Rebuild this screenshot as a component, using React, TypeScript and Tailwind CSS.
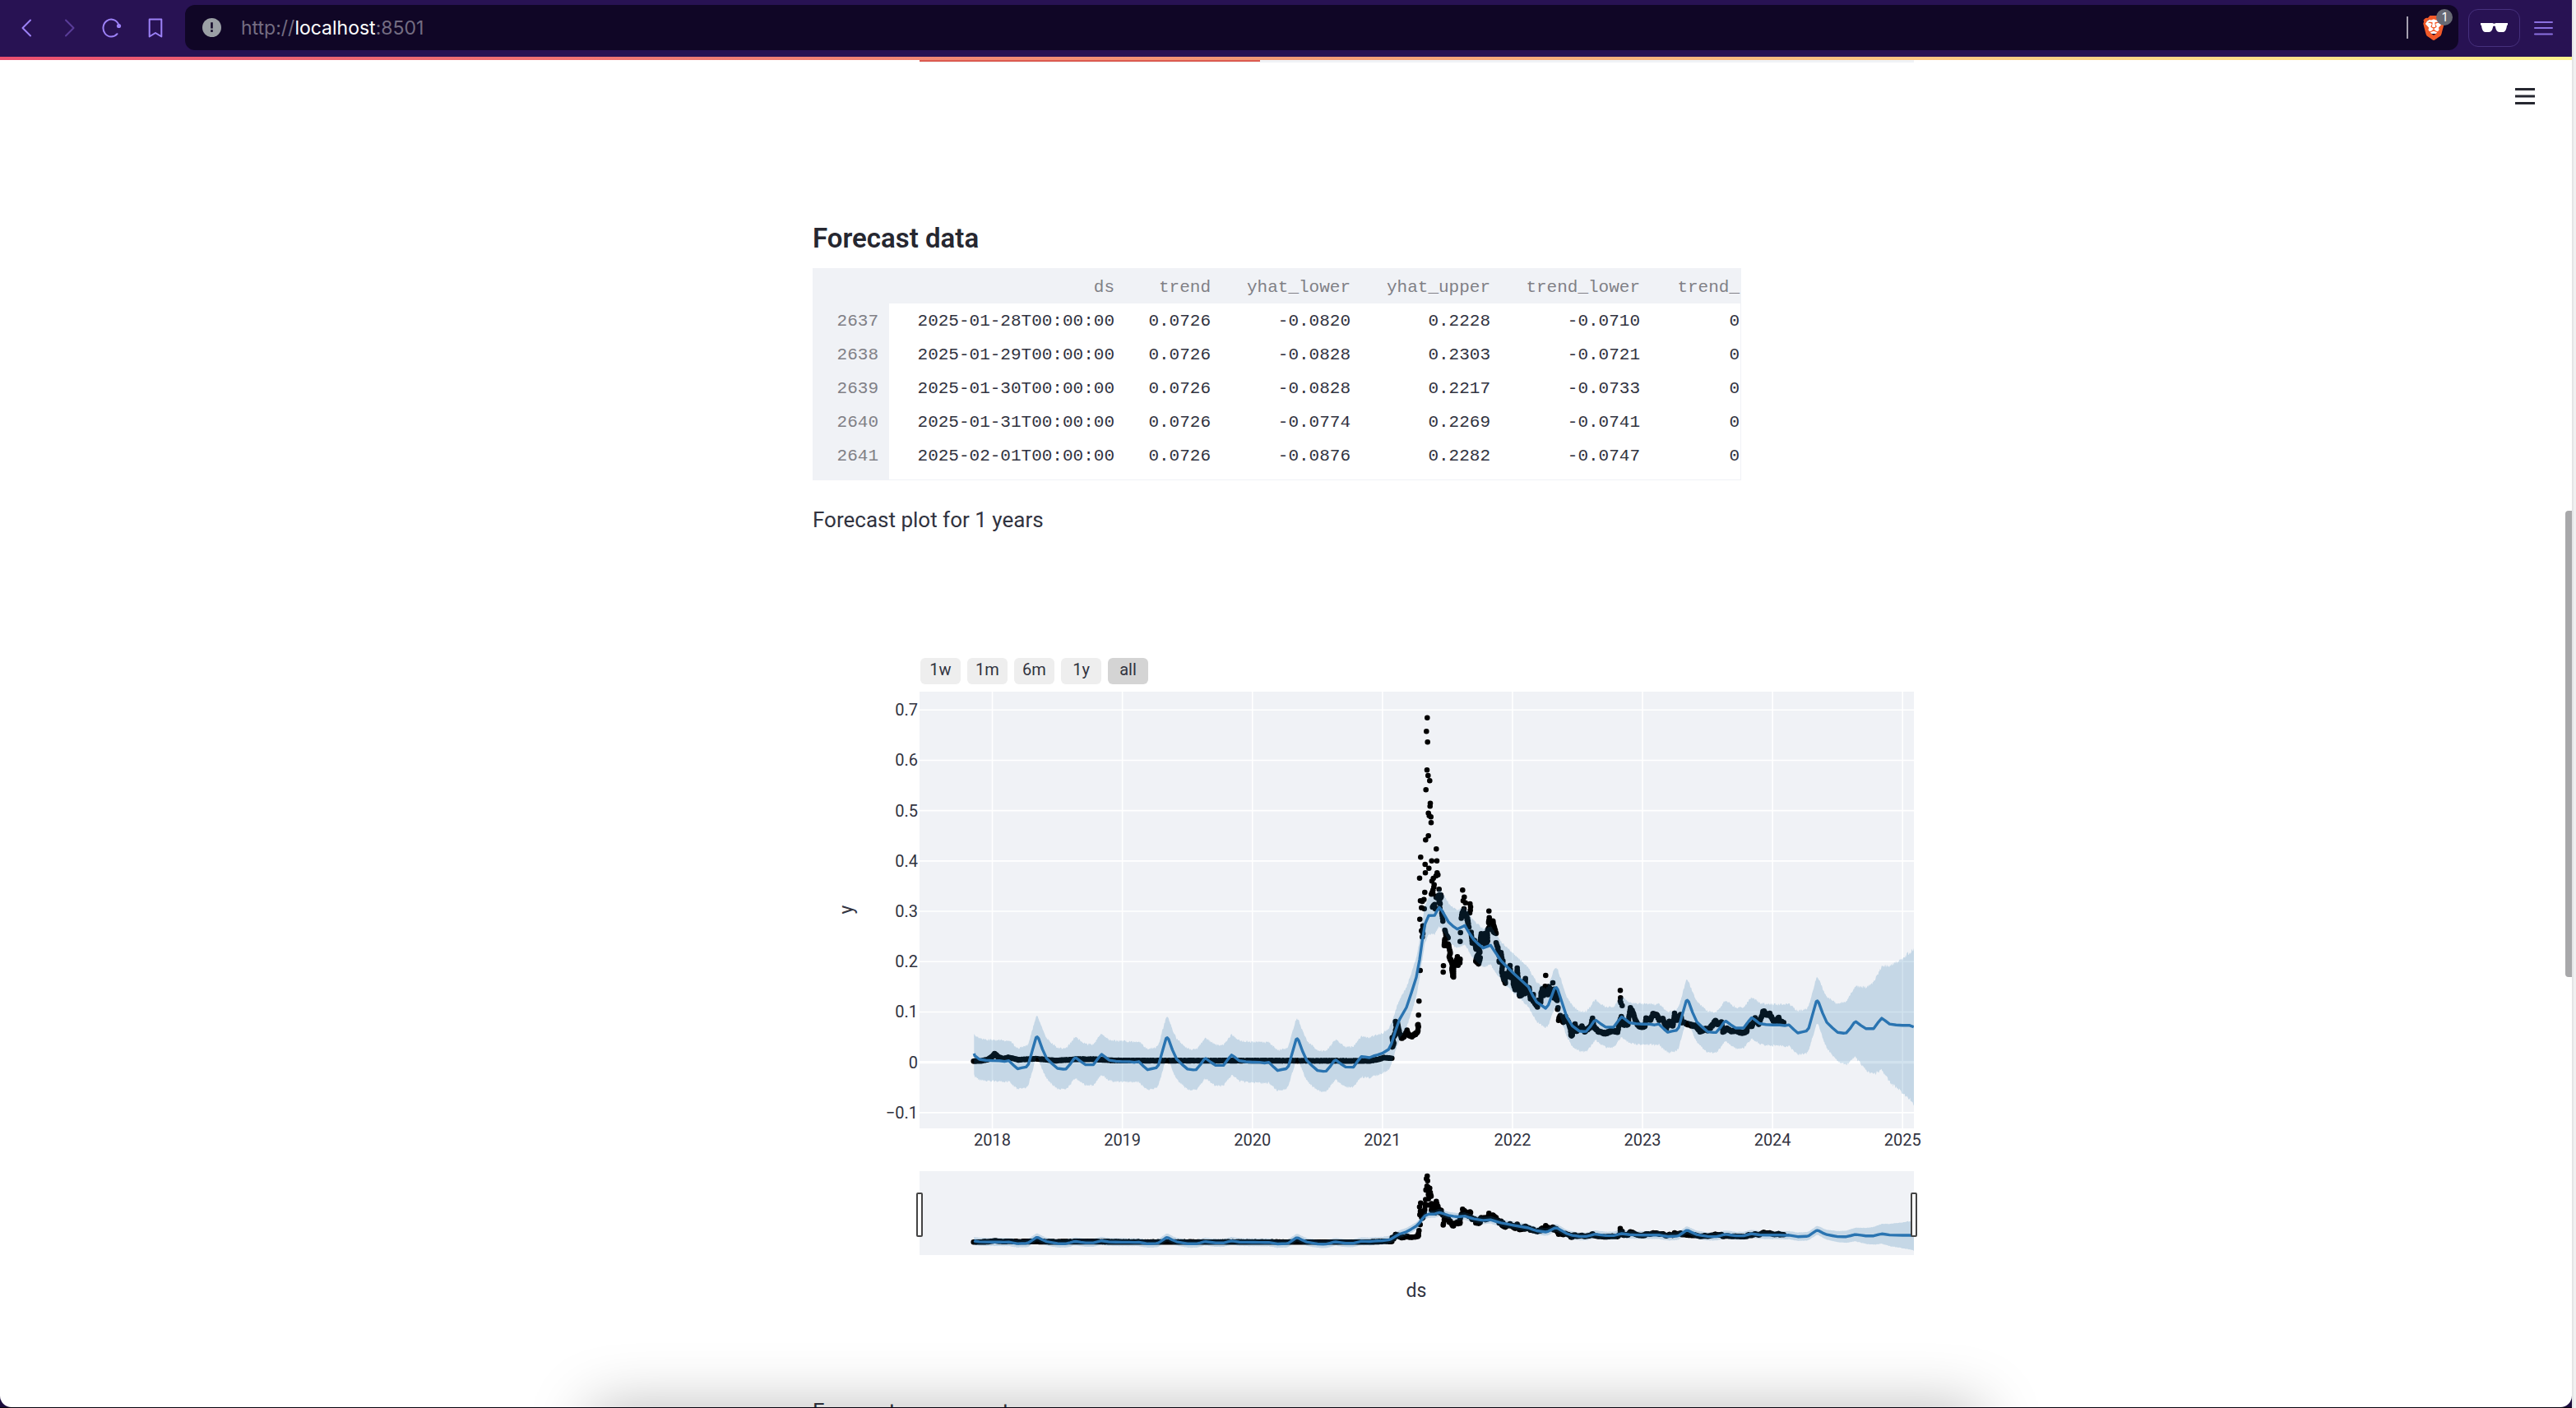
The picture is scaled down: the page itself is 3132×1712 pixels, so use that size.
import { SiBrave } from "react-icons/si";

type Point = [number, number];

/* ---------- Chart geometry ---------- */

// Samples are integers on a fine grid: 474.3 units per year, 1836 units per 1.0 of price.
const UNITS_PER_YEAR = 474.3;
const UNITS_PER_PRICE = 1836;
const X_2021 = 62.5;
const Y_ZERO = 1355;

const LEFT = 1118;
const RIGHT = 2327;
const MAIN_TOP = 841;
const MAIN_BOTTOM = 1372;
const NAV_TOP = 1424;
const NAV_BOTTOM = 1526;

const yearX = (year: number) => X_2021 + (year - 2021) * UNITS_PER_YEAR;
const priceY = (price: number) => Y_ZERO - price * UNITS_PER_PRICE;

type Scale = (p: Point) => Point;
const mainScale: Scale = ([x, y]) => [1660 + x / 3, 840 + y / 3];
const navScale: Scale = ([x, y]) => {
  const main = 840 + y / 3;
  const ratio = (main - MAIN_TOP) / (MAIN_BOTTOM - MAIN_TOP);
  return [1660 + x / 3, NAV_TOP + ratio * (NAV_BOTTOM - NAV_TOP)];
};

/* ---------- Forecast ---------- */

const SEASON: Point[] = [
  [0, 0.0033], [0.055, 0.0033], [0.094, 0.002], [0.126, 0.0036], [0.165, -0.006], [0.194, -0.0125],
  [0.225, -0.0105], [0.26, -0.0087], [0.278, -0.003], [0.305, 0.022], [0.336, 0.05], [0.345, 0.0512], [0.355, 0.048],
  [0.385, 0.027], [0.417, 0.0087], [0.46, -0.002], [0.501, -0.011], [0.545, -0.0125], [0.567, -0.012],
  [0.6, -0.002], [0.628, 0.0085], [0.642, 0.0103], [0.68, 0.003], [0.717, -0.0033], [0.777, -0.0033],
  [0.815, 0.01], [0.84, 0.0174], [0.865, 0.013], [0.9, 0.006], [0.95, 0.004],
];

const TREND: Point[] = [
  [2017, 0], [2018, 0], [2019, -0.002], [2020, -0.003], [2020.8, -0.0065],
  [2022.5, 0.0737], [2023, 0.0725], [2024, 0.071], [2026, 0.069],
];

const RALLY: Point[] = [
  [-14, 1334], [0, 1336], [15, 1338], [30, 1332], [45, 1328], [62, 1322], [85, 1308], [95, 1288], [110, 1240], [125, 1198], [150, 1155],
  [168, 1102], [186, 1045], [198, 980], [208, 910], [218, 850], [231, 820], [253, 819], [262, 802], [270, 790], [278, 799], [304, 844],
  [322, 860], [335, 869], [363, 856], [380, 885], [395, 907], [415, 926], [430, 938], [457, 928], [475, 955], [495, 985], [515, 1005], [540, 1030],
  [573, 1060], [595, 1080], [610, 1110], [625, 1135], [658, 1158], [668, 1145], [690, 1085], [697, 1082], [702, 1090], [735, 1190],
  [755, 1222], [780, 1241],
];

const SPREAD: Point[] = [
  [2017, 0.041], [2021.2, 0.04], [2021.33, 0.037], [2022.5, 0.04], [2024.08, 0.041], [2024.34, 0.046], [2024.504, 0.057],
  [2024.635, 0.07], [2024.77, 0.09], [2024.84, 0.104], [2025, 0.133], [2025.1, 0.156],
];

function lerp(points: Point[], at: number): number {
  for (let i = 1; i < points.length; i++) {
    const [x1, y1] = points[i];
    if (at <= x1) {
      const [x0, y0] = points[i - 1];
      return y0 + ((at - x0) / (x1 - x0)) * (y1 - y0);
    }
  }
  return points[points.length - 1][1];
}

function noise(seed: number): number {
  const n = Math.sin(seed * 12.9898) * 43758.5453;
  return (n - Math.floor(n)) * 2 - 1;
}

const seasonal: Point[] = [];
for (let year = 2017; year <= 2025; year++) {
  for (const [f, v] of SEASON) {
    const t = year + f;
    if (t > 2017.86 && t < 2025.086) seasonal.push([yearX(t), priceY(v + lerp(TREND, t))]);
  }
}

const forecast: Point[] = [
  [-1427, 1323],
  ...seasonal.filter(([x]) => x < -14),
  ...RALLY,
  ...seasonal.filter(([x]) => x > 780),
  [yearX(2025.086), 1226],
];

const upper: Point[] = [];
const lower: Point[] = [];
for (let x = -1427; x <= 2002; x += 2) {
  const t = 2021 + (x - X_2021) / UNITS_PER_YEAR;
  const mid = lerp(forecast, x);
  const spread = lerp(SPREAD, t) * UNITS_PER_PRICE;
  const wobble = 2.5 + spread / 50;
  upper.push([x, mid - spread + noise(x + 5000) * wobble]);
  lower.push([x, mid + spread + noise(x + 9000) * wobble]);
}

/* ---------- Observations ---------- */

const RUNS: Point[][] = [
  [
    [-1429, 1351], [-1400, 1350], [-1377, 1345], [-1360, 1334], [-1352, 1323], [-1340, 1335], [-1320, 1342], [-1302, 1337], [-1265, 1346],
    [-1203, 1342], [-1128, 1349], [-1054, 1344], [-990, 1344], [-929, 1348], [-800, 1349], [-413, 1349], [16, 1350], [47, 1345], [66, 1338], [97, 1340],
  ],
  [[98, 1302], [104, 1285], [98, 1268], [108, 1255], [113, 1225], [110, 1208], [118, 1215], [124, 1245], [132, 1266], [142, 1260], [152, 1240],
    [157, 1254], [170, 1260], [183, 1252], [192, 1240], [194, 1222], [191, 1217]],
  [[258, 755], [268, 748], [277, 748], [269, 765], [273, 778], [272, 790]],
  [[245, 790], [253, 782], [255, 798]],
  [[279, 812], [283, 838]],
  [[290, 872], [294, 890], [302, 902]],
  [[290, 905], [288, 928], [303, 925], [310, 955], [306, 972], [318, 995], [316, 1015], [319, 1038], [322, 1042], [322, 1010], [330, 990], [336, 971], [338, 1000], [346, 980], [345, 990]],
  [[350, 828], [353, 812], [360, 797], [360, 820], [368, 812], [371, 835], [376, 850], [373, 830]],
  [[386, 882], [390, 920], [398, 910], [404, 942], [413, 935], [418, 952], [408, 968], [403, 985], [413, 994], [419, 975]],
  [[418, 918], [423, 885], [426, 918], [434, 888], [438, 925], [446, 910], [445, 878], [453, 862], [462, 868], [468, 880], [477, 884]],
  [[452, 826], [450, 845], [458, 852], [466, 838], [467, 855], [474, 873]],
  [
    [477, 918], [484, 940], [488, 965], [495, 955], [498, 975], [488, 987], [502, 985], [498, 1025], [504, 1050], [511, 1066], [508, 1030], [520, 1042],
    [528, 1005], [532, 1045], [540, 1040], [540, 1070], [547, 1091], [552, 1050], [554, 1014], [558, 1055], [563, 1075], [562, 1111], [572, 1108],
    [575, 1075], [584, 1051], [582, 1105], [590, 1085], [598, 1085], [602, 1122], [613, 1108], [612, 1130], [628, 1151], [632, 1130], [640, 1135],
    [641, 1105], [646, 1088], [650, 1110], [656, 1080], [660, 1090], [666, 1108], [668, 1078], [680, 1098], [690, 1090], [688, 1118], [700, 1127], [696, 1100],
  ],
  [[703, 1157], [701, 1163]],
  [
    [705, 1200], [710, 1184], [722, 1208], [730, 1190], [742, 1212], [748, 1230], [750, 1256], [755, 1256], [752, 1225], [765, 1218], [770, 1240],
    [790, 1225], [800, 1242], [822, 1225], [829, 1193], [833, 1225], [850, 1242], [875, 1250], [900, 1240], [920, 1245], [928, 1205], [934, 1190], [942, 1217],
    [958, 1217], [960, 1200], [967, 1158], [976, 1172], [985, 1200], [992, 1215], [1005, 1228], [1020, 1222], [1024, 1195], [1040, 1200], [1050, 1178], [1065, 1185],
    [1072, 1200], [1085, 1195], [1098, 1232], [1110, 1205], [1122, 1222], [1128, 1178], [1138, 1200], [1150, 1182], [1155, 1208],
    [1175, 1215], [1190, 1220], [1205, 1222], [1222, 1243], [1240, 1232], [1250, 1238], [1268, 1218], [1276, 1203], [1285, 1215], [1300, 1210],
    [1304, 1243], [1320, 1232], [1335, 1242], [1350, 1240], [1378, 1249], [1392, 1240], [1395, 1220], [1410, 1222], [1422, 1195], [1435, 1215],
    [1445, 1190], [1452, 1166], [1462, 1182], [1475, 1178], [1486, 1200], [1492, 1208], [1508, 1192], [1512, 1210], [1526, 1208],
  ],
];

const OUTLIERS: Point[] = [
  [226, 98], [223, 148], [227, 187], [225, 289], [229, 309], [235, 328], [221, 361], [237, 410], [236, 421], [230, 446], [233, 455], [239, 460],
  [240, 481], [230, 529], [220, 544], [259, 577], [202, 607], [242, 620], [261, 620], [218, 633], [232, 647], [219, 664], [198, 683], [262, 664],
  [265, 671], [258, 675], [248, 684], [243, 694], [251, 707], [250, 716], [247, 727], [244, 735], [241, 742], [247, 740], [269, 724], [217, 735],
  [214, 761], [201, 766], [208, 768], [205, 791], [215, 795], [199, 833], [210, 857], [208, 872], [205, 875], [210, 885], [208, 898], [200, 1020],
  [196, 1132], [194, 1183], [285, 1003], [284, 1026], [346, 914], [347, 882], [355, 727], [361, 752], [357, 766], [365, 773], [382, 777],
  [384, 788], [383, 800], [381, 810], [378, 862], [451, 803], [658, 1038], [684, 1065], [930, 1093], [931, 1120], [930, 1132], [937, 1148], [932, 1138],
];

const observations: Point[] = [...OUTLIERS];
RUNS.forEach((run, r) => {
  for (let i = 1; i < run.length; i++) {
    const [x0, y0] = run[i - 1];
    const [x1, y1] = run[i];
    const steps = Math.max(1, Math.round(Math.max(Math.abs(x1 - x0) / 1.3, Math.abs(y1 - y0) / 9)));
    const jitter = r === 0 ? 1 : 3;
    for (let s = 0; s <= steps; s++) {
      const k = s / steps;
      observations.push([x0 + (x1 - x0) * k, y0 + (y1 - y0) * k + noise(x0 + s * 7.3) * jitter]);
    }
  }
});

/* ---------- Paths ---------- */

const fmt = ([x, y]: Point) => `${x.toFixed(1)} ${y.toFixed(1)}`;
const linePath = (points: Point[], scale: Scale) => "M" + points.map((p) => fmt(scale(p))).join("L");
const areaPath = (scale: Scale) => linePath([...upper, ...[...lower].reverse()], scale) + "Z";
const dotPath = (scale: Scale) => observations.map((p) => `M${fmt(scale(p))}h0`).join("");

function Traces({ scale }: { scale: Scale }) {
  return (
    <>
      <path d={dotPath(scale)} fill="none" stroke="#000" strokeWidth="6.6" strokeLinecap="round" />
      <path d={areaPath(scale)} fill="#1970ab" fillOpacity="0.2" />
      <path d={linePath(forecast, scale)} fill="none" stroke="#2a74b1" strokeWidth="3.4" strokeLinejoin="round" />
    </>
  );
}

const YEARS = [2018, 2019, 2020, 2021, 2022, 2023, 2024, 2025];
const PRICES = [0.7, 0.6, 0.5, 0.4, 0.3, 0.2, 0.1, 0, -0.1];

function ForecastChart() {
  return (
    <svg viewBox="988 832 1354 760" className="block w-full fill-[#31333f] font-[Roboto,sans-serif]" role="img" aria-label="Forecast plot">
      <defs>
        <clipPath id="main-plot">
          <rect x={LEFT} y={MAIN_TOP} width={RIGHT - LEFT} height={MAIN_BOTTOM - MAIN_TOP} />
        </clipPath>
        <clipPath id="nav-plot">
          <rect x={LEFT} y={NAV_TOP} width={RIGHT - LEFT} height={NAV_BOTTOM - NAV_TOP} />
        </clipPath>
      </defs>

      <rect x={LEFT} y={MAIN_TOP} width={RIGHT - LEFT} height={MAIN_BOTTOM - MAIN_TOP} fill="#f0f2f6" />
      {YEARS.map((year) => {
        const [x] = mainScale([yearX(year), 0]);
        return (
          <g key={year}>
            <line x1={x} x2={x} y1={MAIN_TOP} y2={MAIN_BOTTOM} stroke="#fff" strokeWidth="1.6" />
            <text x={x} y="1393" fontSize="20" textAnchor="middle">{year}</text>
          </g>
        );
      })}
      {PRICES.map((price) => {
        const [, y] = mainScale([0, priceY(price)]);
        return (
          <g key={price}>
            <line x1={LEFT} x2={RIGHT} y1={y} y2={y} stroke="#fff" strokeWidth={price === 0 ? 3.2 : 1.6} />
            <text x={LEFT - 2} y={y + 7} fontSize="20" textAnchor="end">{price < 0 ? `−${-price}` : price}</text>
          </g>
        );
      })}
      <g clipPath="url(#main-plot)">
        <Traces scale={mainScale} />
      </g>

      <rect x={LEFT} y={NAV_TOP} width={RIGHT - LEFT} height={NAV_BOTTOM - NAV_TOP} fill="#f0f2f6" />
      <g clipPath="url(#nav-plot)">
        <Traces scale={navScale} />
      </g>

      <text x="1722" y="1577" fontSize="23" textAnchor="middle">ds</text>
      <text x="1037" y="1106" fontSize="23" textAnchor="middle" transform="rotate(-90 1037 1106)">y</text>
    </svg>
  );
}

const THUMB =
  "pointer-events-none absolute inset-0 h-full w-full appearance-none bg-transparent [&::-webkit-slider-thumb]:pointer-events-auto [&::-webkit-slider-thumb]:h-[54px] [&::-webkit-slider-thumb]:w-2 [&::-webkit-slider-thumb]:appearance-none [&::-webkit-slider-thumb]:rounded-[2px] [&::-webkit-slider-thumb]:border-2 [&::-webkit-slider-thumb]:border-[#444] [&::-webkit-slider-thumb]:bg-white";

const RANGES = ["1w", "1m", "6m", "1y", "all"];

function ForecastFigure() {
  return (
    <figure className="relative mt-37 w-[1354px]">
      <div className="ml-[131px] flex gap-2">
        {RANGES.map((range) => (
          <button
            key={range}
            type="button"
            className={`h-8 w-[49px] rounded-md pb-1 text-[20px] leading-6 ${range === "all" ? "bg-[#d4d4d4]" : "bg-[#eeeeee]"}`}
          >
            {range}
          </button>
        ))}
      </div>
      <ForecastChart />
      <div className="absolute top-[650px] left-[126px] h-[54px] w-[1217px]">
        <input type="range" min="0" max="100" defaultValue="0" aria-label="Range start" className={THUMB} />
        <input type="range" min="0" max="100" defaultValue="100" aria-label="Range end" className={THUMB} />
      </div>
    </figure>
  );
}

/* ---------- Table ---------- */

const COLUMNS = ["ds", "trend", "yhat_lower", "yhat_upper", "trend_lower", "trend_"];
const ROWS = [
  ["2637", "2025-01-28T00:00:00", "0.0726", "-0.0820", "0.2228", "-0.0710", "0"],
  ["2638", "2025-01-29T00:00:00", "0.0726", "-0.0828", "0.2303", "-0.0721", "0"],
  ["2639", "2025-01-30T00:00:00", "0.0726", "-0.0828", "0.2217", "-0.0733", "0"],
  ["2640", "2025-01-31T00:00:00", "0.0726", "-0.0774", "0.2269", "-0.0741", "0"],
  ["2641", "2025-02-01T00:00:00", "0.0726", "-0.0876", "0.2282", "-0.0747", "0"],
];

function ForecastTable() {
  return (
    <div className="mt-4 overflow-hidden border border-[#f0f2f6]">
      <table className="w-full table-fixed text-right font-['Liberation_Mono',monospace] text-[21px] leading-6">
        <colgroup>
          <col className="w-[92px]" />
          <col className="w-[287px]" />
          <col className="w-[117px]" />
          <col className="w-[170px]" />
          <col className="w-[170px]" />
          <col className="w-[182px]" />
          <col />
        </colgroup>
        <thead>
          <tr className="h-[42px] bg-[#f0f2f6] text-[#808086]">
            <th aria-label="index" />
            {COLUMNS.map((name) => (
              <th key={name} scope="col" className="p-0 pt-1 pr-[13px] font-normal last:pr-px">{name}</th>
            ))}
          </tr>
        </thead>
        <tbody>
          {ROWS.map(([index, ...cells]) => (
            <tr key={index} className="h-[41px]">
              <th scope="row" className="bg-[#f0f2f6] p-0 pt-[2px] pr-[13px] font-normal text-[#808086]">{index}</th>
              {cells.map((cell, i) => (
                <td key={i} className="p-0 pt-[2px] pr-[13px] last:pr-px">{cell}</td>
              ))}
            </tr>
          ))}
          <tr className="h-[9px]">
            <td className="bg-[#f0f2f6] p-0" />
            <td colSpan={6} className="p-0" />
          </tr>
        </tbody>
      </table>
    </div>
  );
}

/* ---------- Browser chrome ---------- */

function Toolbar() {
  return (
    <header className="flex h-[69px] items-center bg-[#281253] pr-[23px] pb-[2px] pl-6">
      <nav className="flex items-center gap-8 text-[#9d82f8]">
        <div className="flex items-center gap-9">
          <button type="button" aria-label="Back">
            <svg className="block h-6 w-4" viewBox="0 0 16 24" fill="none" stroke="currentColor" strokeWidth="2" strokeLinecap="round" strokeLinejoin="round">
              <path d="M13 2.500 3.500 12 13 21.500" />
            </svg>
          </button>
          <button type="button" aria-label="Forward" className="text-[#5a3d9a]">
            <svg className="block h-6 w-4" viewBox="0 0 16 24" fill="none" stroke="currentColor" strokeWidth="2" strokeLinecap="round" strokeLinejoin="round">
              <path d="M4 2.500 13.500 12 4 21.500" />
            </svg>
          </button>
        </div>
        <button type="button" aria-label="Reload">
          <svg className="block h-6 w-6" viewBox="0 0 24 24" fill="none" stroke="currentColor" strokeWidth="2" strokeLinecap="round">
            <path d="M18.500 19.200A9.800 10.500 0 1 1 20.300 8" />
            <circle cx="20.500" cy="9.500" r="2.600" fill="currentColor" stroke="none" />
          </svg>
        </button>
        <button type="button" aria-label="Bookmark">
          <svg className="block h-6 w-[18px]" viewBox="0 0 18 24" fill="none" stroke="currentColor" strokeWidth="2" strokeLinejoin="round">
            <path d="M1.700 1.500h14.600v21L9 18 1.700 22.500z" />
          </svg>
        </button>
      </nav>

      <div className="ml-[27px] flex h-[55px] flex-1 items-center rounded-xl bg-[#100626] pl-[21px] pr-[15px]">
        <svg className="h-[23px] w-[23px]" viewBox="0 0 22 22">
          <circle cx="11" cy="11" r="11" fill="#9ba0a5" />
          <rect x="9.800" y="5" width="2.400" height="7" fill="#100626" />
          <rect x="9.800" y="13.600" width="2.400" height="2.600" fill="#100626" />
        </svg>
        <button type="button" aria-label="Address" className="flex-1 pl-6 text-left font-[Inter,sans-serif] text-[23px] leading-7 text-[#746d82]">
          http://<span className="text-white">localhost</span>:8501
        </button>
        <div className="h-[27px] w-[2px] bg-[#a5a0b0]" />
        <button type="button" aria-label="Brave Shields" className="relative ml-4">
          <span className="absolute inset-x-1 top-1 bottom-2 rounded-full bg-white" />
          <SiBrave className="relative h-[30px] w-[30px] text-[#f25a29]" />
          <span className="absolute -top-2 -right-2 h-5 w-5 rounded-full bg-[#676974] font-[Inter,sans-serif] text-[14px] leading-5 text-white">1</span>
        </button>
      </div>

      <button type="button" aria-label="Private profile" className="ml-3 flex h-[46px] w-[63px] items-center justify-center rounded-xl border border-[#46307d]">
        <svg className="h-[11px] w-[33px]" viewBox="0 0 33 11" fill="#fff">
          <path d="M0 0h14.500q2 1.300 4 0H33v2.200l-1 .8c-.5 4-1.800 8-4.500 8h-4.800c-2.800 0-4.200-3-4.900-7q-1.300-.8-2.600 0c-.7 4-2.100 7-4.900 7H5.500C2.800 11 1.500 7 1 3L0 2.200z" />
        </svg>
      </button>
      <button type="button" aria-label="Browser menu" className="ml-[17px]">
        <svg className="block h-[18px] w-[23px]" viewBox="0 0 23 18" stroke="#8b70e0" strokeWidth="2" strokeLinecap="round">
          <path d="M1 2h21M1 9h21M1 16.500h21" />
        </svg>
      </button>
    </header>
  );
}

export default function App() {
  return (
    <div className="flex h-screen overflow-hidden bg-[#f0f0f1] font-[Roboto,sans-serif] text-[#31333f]">
      <div className="flex min-w-0 flex-1 flex-col border-b border-[#08040f] bg-[#1c0d3d]">
        <Toolbar />
        <div className="h-1 shrink-0 bg-linear-to-r from-[#ea4f70] via-[#f39a76] to-[#fff38e]" />

        <div className="relative min-h-0 flex-1 overflow-hidden rounded-b-[14px] bg-white pr-[22px]">
          <button type="button" aria-label="Main menu" className="absolute top-8 right-[45px]">
            <svg className="block h-6 w-6" viewBox="0 0 24 24" stroke="#262730" strokeWidth="3">
              <path d="M0 3.500h24M0 12h24M0 20.500h24" />
            </svg>
          </button>

          <main className="mx-auto w-full max-w-[1129px]">
            <div className="ml-[130px] flex h-[3px] w-[1209px] bg-[#f0f2f6]">
              <div className="h-[2px] w-[414px] bg-[#dc5b50]" />
            </div>
            <h2 className="mt-[194px] text-[33px] leading-10 font-semibold text-[#262730]">Forecast data</h2>
            <ForecastTable />
            <p className="mt-7 text-[26px] leading-10">Forecast plot for 1 years</p>
            <ForecastFigure />
            <p className="mt-[104px] text-[26px] leading-10">Forecast components</p>
          </main>

          <div className="absolute top-full right-[23%] left-[23%] h-40 shadow-[0_0_75px_rgba(0,0,0,0.27)]" />
          <div className="absolute top-[548px] right-0 h-[567px] w-2 rounded-l bg-[#a8a8aa]" />
        </div>
      </div>
      <div className="w-[5px] border-l-2 border-[#e4e4e6]" />
    </div>
  );
}
